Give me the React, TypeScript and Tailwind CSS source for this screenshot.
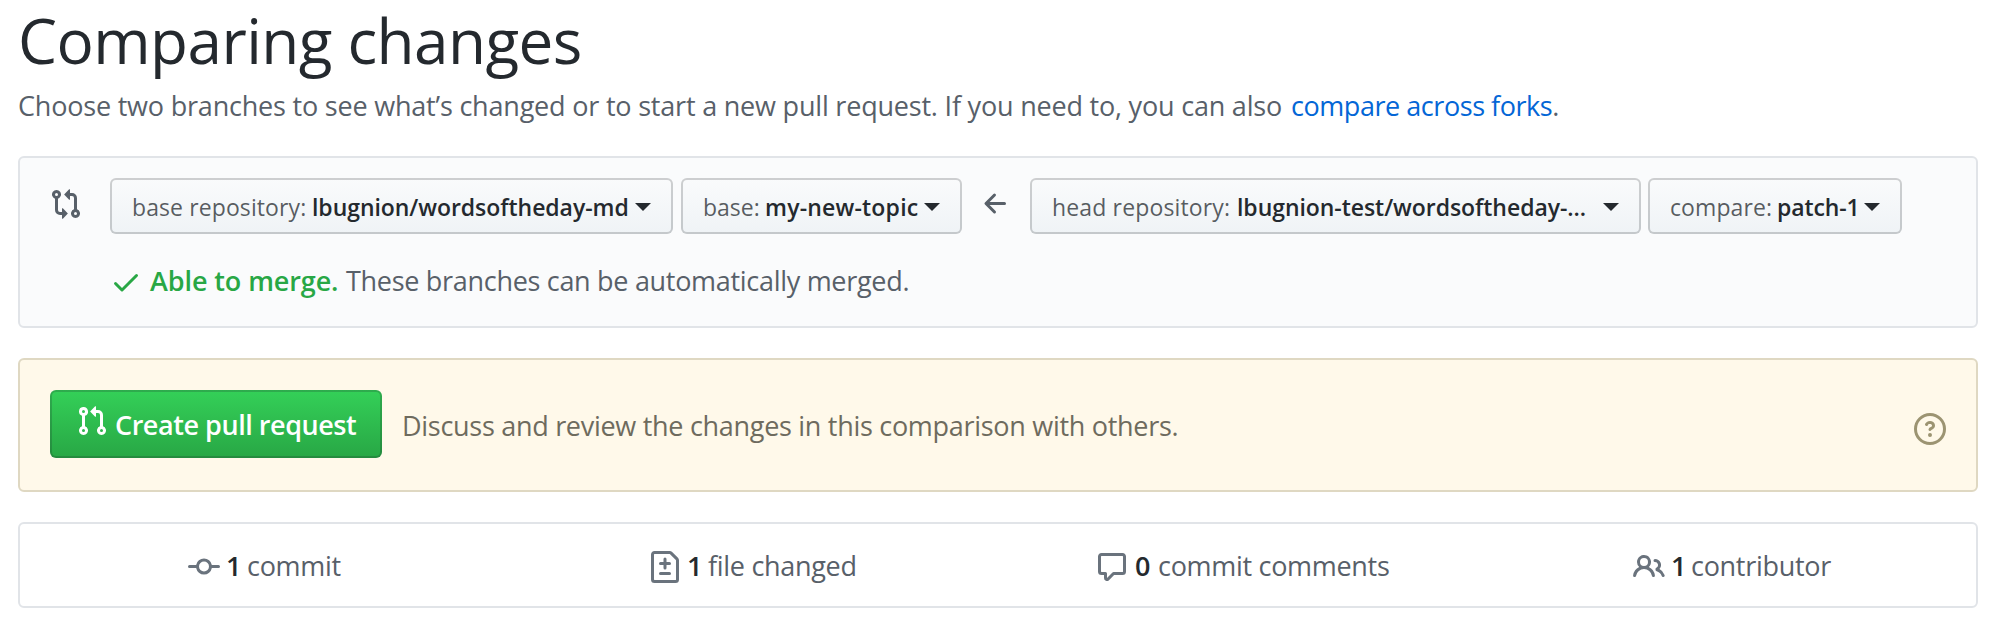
import type { ReactNode } from "react";

const ICONS = {
  compare:
    "M9.573.677L7.177 3.073a.25.25 0 000 .354l2.396 2.396A.25.25 0 0010 5.646V4h1a1 1 0 011 1v5.628a2.251 2.251 0 101.5 0V5A2.5 2.5 0 0011 2.5h-1V.854a.25.25 0 00-.427-.177zM6 12v-1.646a.25.25 0 01.427-.177l2.396 2.396a.25.25 0 010 .354l-2.396 2.396A.25.25 0 016 15.146V13.5H5A2.5 2.5 0 012.5 11V5.372a2.25 2.25 0 111.5 0V11a1 1 0 001 1h1zm6.75 0a.75.75 0 100 1.5.75.75 0 000-1.5zM4 3.25a.75.75 0 11-1.5 0 .75.75 0 011.5 0z",
  pullRequest:
    "M7.177 3.073L9.573.677A.25.25 0 0110 .854v4.792a.25.25 0 01-.427.177L7.177 3.427a.25.25 0 010-.354zM3.75 2.5a.75.75 0 100 1.5.75.75 0 000-1.5zm-2.25.75a2.25 2.25 0 113 2.122v5.256a2.251 2.251 0 11-1.5 0V5.372A2.25 2.25 0 011.5 3.25zM11 2.5h-1V4h1a1 1 0 011 1v5.628a2.251 2.251 0 101.5 0V5A2.5 2.5 0 0011 2.5zm1 10.25a.75.75 0 111.5 0 .75.75 0 01-1.5 0zM3.75 12a.75.75 0 100 1.5.75.75 0 000-1.5z",
  check:
    "M13.78 4.22a.75.75 0 010 1.06l-7.25 7.25a.75.75 0 01-1.06 0L2.22 9.28a.75.75 0 011.06-1.06L6 10.94l6.72-6.72a.75.75 0 011.06 0z",
  commit:
    "M10.5 7.75a2.5 2.5 0 11-5 0 2.5 2.5 0 015 0zm1.43.75a4.002 4.002 0 01-7.86 0H.75a.75.75 0 110-1.5h3.32a4.001 4.001 0 017.86 0h3.32a.75.75 0 110 1.5h-3.32z",
  diff: "M2.75 1.5a.25.25 0 00-.25.25v12.5c0 .138.112.25.25.25h10.5a.25.25 0 00.25-.25V4.664a.25.25 0 00-.073-.177l-2.914-2.914a.25.25 0 00-.177-.073H2.75zM1 1.75C1 .784 1.784 0 2.75 0h7.586c.464 0 .909.184 1.237.513l2.914 2.914c.329.328.513.773.513 1.237v9.586A1.75 1.75 0 0113.25 16H2.75A1.75 1.75 0 011 14.25V1.75zm7 1.5a.75.75 0 01.75.75v1.5h1.5a.75.75 0 010 1.5h-1.5v1.5a.75.75 0 01-1.5 0V7h-1.5a.75.75 0 010-1.5h1.5V4A.75.75 0 018 3.25zm-3 8a.75.75 0 01.75-.75h4.5a.75.75 0 010 1.5h-4.5a.75.75 0 01-.75-.75z",
  comment:
    "M2.75 2.5a.25.25 0 00-.25.25v7.5c0 .138.112.25.25.25h2a.75.75 0 01.75.75v2.19l2.72-2.72a.75.75 0 01.53-.22h4.5a.25.25 0 00.25-.25v-7.5a.25.25 0 00-.25-.25H2.75zM1 2.75C1 1.784 1.784 1 2.75 1h10.5c.966 0 1.75.784 1.75 1.75v7.5A1.75 1.75 0 0113.25 12H9.06l-2.573 2.573A1.457 1.457 0 014 13.543V12H2.75A1.75 1.75 0 011 10.25v-7.5z",
  people:
    "M5.5 3.5a2 2 0 100 4 2 2 0 000-4zM2 5.5a3.5 3.5 0 115.898 2.549 5.507 5.507 0 013.034 4.084.75.75 0 11-1.482.235 4.001 4.001 0 00-7.9 0 .75.75 0 01-1.482-.236A5.507 5.507 0 013.102 8.05 3.49 3.49 0 012 5.5zM11 4a.75.75 0 100 1.5 1.5 1.5 0 01.666 2.844.75.75 0 00-.416.672v.352a.75.75 0 00.574.73c1.2.289 2.162 1.2 2.522 2.372a.75.75 0 101.434-.44 5.01 5.01 0 00-2.56-3.012A3 3 0 0011 4z",
  question:
    "M8 1.5a6.5 6.5 0 100 13 6.5 6.5 0 000-13zM0 8a8 8 0 1116 0A8 8 0 010 8zm9 3a1 1 0 11-2 0 1 1 0 012 0zM6.92 6.085c.081-.16.19-.299.34-.398.145-.097.371-.187.74-.187.28 0 .553.087.738.225A.613.613 0 019 6.25c0 .177-.04.264-.077.318a.956.956 0 01-.277.245c-.076.051-.158.1-.258.161l-.007.004a7.728 7.728 0 00-.313.195 2.416 2.416 0 00-.692.661.75.75 0 001.248.832.956.956 0 01.276-.245 6.3 6.3 0 01.26-.16l.006-.004c.093-.057.204-.123.313-.195.222-.149.487-.355.692-.662.214-.32.329-.702.329-1.15 0-.76-.36-1.348-.863-1.725A2.76 2.76 0 008 4c-.631 0-1.155.16-1.572.438-.413.276-.68.638-.849.977a.75.75 0 101.342.67z",
  arrowLeft:
    "M7.78 12.53a.75.75 0 01-1.06 0L2.47 8.28a.75.75 0 010-1.06l4.25-4.25a.75.75 0 011.06 1.06L4.81 7h7.44a.75.75 0 010 1.5H4.81l2.97 2.97a.75.75 0 010 1.06z",
};

function Icon({ name, className = "" }: { name: keyof typeof ICONS; className?: string }) {
  return (
    <svg viewBox="0 0 16 16" fill="currentColor" fillRule="evenodd" className={`size-8 shrink-0 ${className}`}>
      <path d={ICONS[name]} />
    </svg>
  );
}

function Select({
  label,
  value,
  className,
  labelClass,
  valueClass,
}: {
  label: string;
  value: string;
  className: string;
  labelClass: string;
  valueClass: string;
}) {
  return (
    <button
      className={`flex h-14 shrink-0 items-start rounded-[6px] border-2 border-[#1b1f23]/20 bg-linear-to-b from-[#fafbfc] to-[#eff3f6] bg-origin-border pl-5 text-left text-[23px] leading-[55px] whitespace-nowrap ${className}`}
    >
      <span className={`shrink-0 text-[#24292e]/75 ${labelClass}`}>{label}</span>
      <span className={`shrink-0 font-[540] text-[#24292e] ${valueClass}`}>{value}</span>
      <svg viewBox="0 0 16 8" className="mt-[23px] h-2 w-4 shrink-0" fill="#24292e">
        <path d="M0 0h16L8 8z" />
      </svg>
    </button>
  );
}

function Stat({
  icon,
  count,
  className,
  countClass,
  children,
}: {
  icon: keyof typeof ICONS;
  count: string;
  className: string;
  countClass: string;
  children: ReactNode;
}) {
  return (
    <div className={`flex items-start pt-[27px] ${className}`}>
      <Icon name={icon} className="text-[#6a737d]" />
      <span className={`-mt-[5px] shrink-0 leading-10 font-[560] text-[#24292e] ${countClass}`}>{count}</span>
      <span className="-mt-[5px] leading-10 tracking-[-0.3px] whitespace-nowrap">{children}</span>
    </div>
  );
}

export default function App() {
  return (
    <main className="h-[624px] w-[1997px] bg-white pr-[19px] pl-[18px] font-['Open_Sans',sans-serif] text-[27px] text-[#586069]">
      <h1 className="flex h-20 items-center text-[62px] leading-[86px] tracking-[-0.55px] whitespace-nowrap text-[#24292e]">
        Comparing changes
      </h1>
      <p className="mt-[6px] flex h-10 leading-10 whitespace-nowrap">
        <span className="w-[1273px] shrink-0 tracking-[-0.2px]">
          Choose two branches to see what’s changed or to start a new pull request. If you need to, you can also
        </span>
        <span>
          <a className="tracking-[-0.45px] text-[#0366d6]">compare across forks</a>.
        </span>
      </p>

      <section className="mt-[30px] h-[172px] rounded-[6px] border-2 border-[#e1e4e8] bg-[#fafbfc] pt-5">
        <div className="flex items-start">
          <Icon name="compare" className="mt-[10px] ml-[30px]" />
          <Select
            label="base repository:"
            value="lbugnion/wordsoftheday-md"
            className="ml-7 w-[563px]"
            labelClass="w-[180px] tracking-[0.1px]"
            valueClass="w-[323px] tracking-[-0.05px]"
          />
          <Select
            label="base:"
            value="my-new-topic"
            className="ml-2 w-[281px]"
            labelClass="w-[62px]"
            valueClass="w-[159px] tracking-[0.2px]"
          />
          <Icon name="arrowLeft" className="mt-[10px] ml-[18px]" />
          <Select
            label="head repository:"
            value="lbugnion-test/wordsoftheday-..."
            className="ml-[18px] w-[611px]"
            labelClass="w-[185px] tracking-[0.15px]"
            valueClass="w-[366px] tracking-[-0.05px]"
          />
          <Select
            label="compare:"
            value="patch-1"
            className="ml-[7px] w-[254px]"
            labelClass="w-[107px] tracking-[0.1px]"
            valueClass="w-[87px] tracking-[-0.1px]"
          />
        </div>
        <div className="mt-[27px] flex items-start pl-[90px] leading-10 whitespace-nowrap">
          <Icon name="check" className="mt-[5px] text-[#28a745]" />
          <span className="ml-2 w-[196px] shrink-0 font-semibold tracking-[-0.1px] text-[#28a745]">Able to merge.</span>
          <span className="tracking-[-0.3px]">These branches can be automatically merged.</span>
        </div>
      </section>

      <section className="mt-[30px] flex h-[134px] items-start rounded-[6px] border-2 border-[#dfd8c2] bg-[#fff9ea] pr-[30px] pl-[30px]">
        <button className="mt-[30px] flex h-[68px] w-[332px] shrink-0 items-start rounded-[6px] border-2 border-[#1b1f23]/20 bg-linear-to-b from-[#34d058] to-[#28a745] bg-origin-border pl-6 text-left font-semibold whitespace-nowrap text-white">
          <Icon name="pullRequest" className="mt-[13px]" />
          <span className="ml-[7px] leading-[65px] tracking-[-0.45px]">Create pull request</span>
        </button>
        <span className="mt-[46px] ml-[20px] leading-10 tracking-[-0.29px] whitespace-nowrap text-[#6e6b5e]">
          Discuss and review the changes in this comparison with others.
        </span>
        <Icon name="question" className="mt-[53px] ml-auto text-[#9c9472]" />
      </section>

      <section className="mt-[30px] grid h-[86px] grid-cols-4 rounded-[6px] border-2 border-[#e1e4e8] bg-white">
        <Stat icon="commit" count="1" className="pl-[168px]" countClass="ml-[6px] w-[21px]">
          commit
        </Stat>
        <Stat icon="diff" count="1" className="pl-[140px]" countClass="ml-[6px] w-[21px]">
          file changed
        </Stat>
        <Stat icon="comment" count="0" className="pl-[98px]" countClass="ml-[7px] w-[23px]">
          commit comments
        </Stat>
        <Stat icon="people" count="1" className="pl-[146px]" countClass="ml-[6px] w-[20px]">
          contributor
        </Stat>
      </section>
    </main>
  );
}
